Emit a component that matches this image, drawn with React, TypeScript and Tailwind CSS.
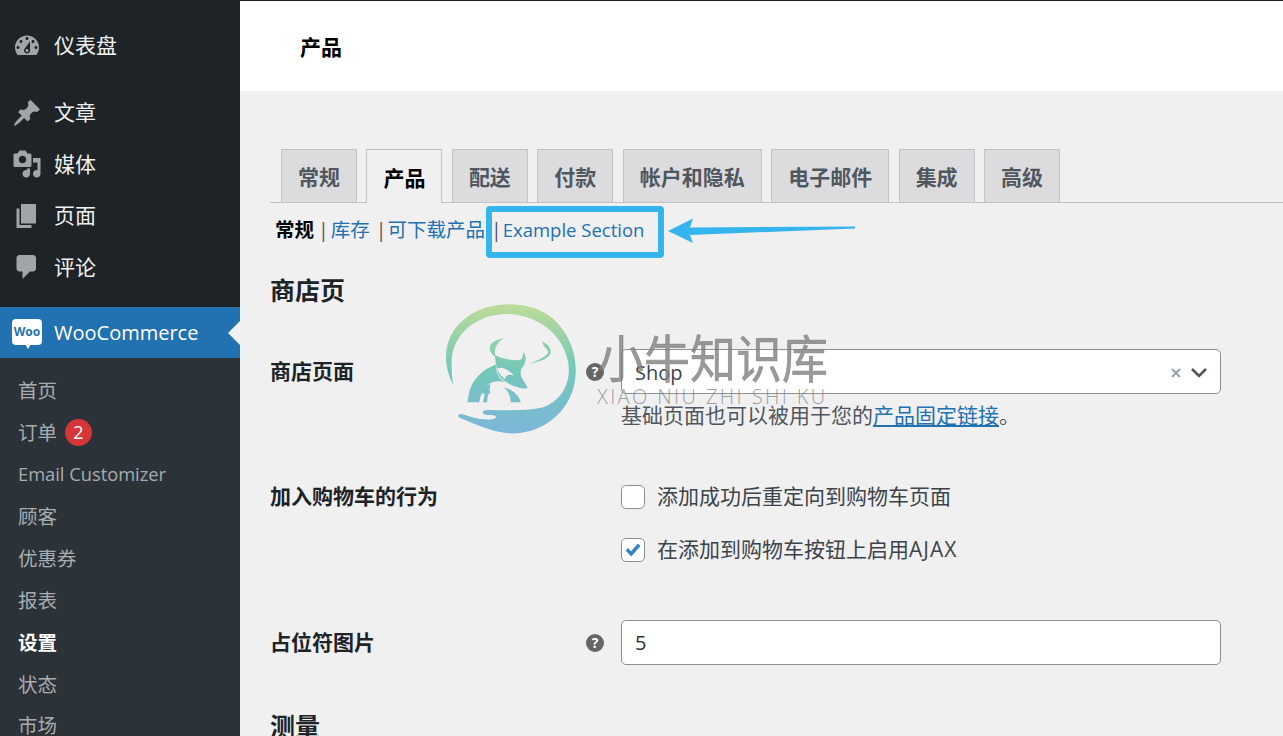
import React from "react";

const F = "[font-family:'Open_Sans','Noto_Sans_CJK_SC',sans-serif]";

const icons: Record<string, string> = {
  dash: "M3.76 16h12.48c1.1-1.37 1.76-3.11 1.76-5 0-4.42-3.58-8-8-8s-8 3.58-8 8c0 1.89.66 3.63 1.76 5zM10 4c.55 0 1 .45 1 1s-.45 1-1 1-1-.45-1-1 .45-1 1-1zM6 6c.55 0 1 .45 1 1s-.45 1-1 1-1-.45-1-1 .45-1 1-1zm8 0c.55 0 1 .45 1 1s-.45 1-1 1-1-.45-1-1 .45-1 1-1zm-5.37 5.55L12 7v6c0 1.1-.9 2-2 2s-2-.9-2-2c0-.57.24-1.08.63-1.45zM4 10c.55 0 1 .45 1 1s-.45 1-1 1-1-.45-1-1 .45-1 1-1zm12 0c.55 0 1 .45 1 1s-.45 1-1 1-1-.45-1-1 .45-1 1-1zm-5 3c0-.55-.45-1-1-1s-1 .45-1 1 .45 1 1 1 1-.45 1-1z",
  post: "M10.44 3.02l1.82-1.82 6.36 6.35-1.83 1.82c-1.05-.68-2.48-.57-3.41.36l-.75.75c-.92.93-1.04 2.35-.35 3.41l-1.83 1.82-2.41-2.41-2.8 2.79c-.42.42-3.38 2.71-3.8 2.29s1.86-3.39 2.28-3.81l2.79-2.79L4.1 9.36l1.83-1.82c1.05.69 2.48.57 3.4-.36l.75-.75c.93-.92 1.05-2.35.36-3.41z",
  media: "M13 11V4c0-.55-.45-1-1-1h-1.67L9 1H5L3.67 3H2c-.55 0-1 .45-1 1v7c0 .55.45 1 1 1h10c.55 0 1-.45 1-1zM7 4.5c1.38 0 2.5 1.12 2.5 2.5S8.38 9.5 7 9.5 4.5 8.38 4.5 7 5.62 4.5 7 4.5zM14 6h5v10.5c0 1.38-1.12 2.5-2.5 2.5S14 17.88 14 16.5s1.12-2.5 2.5-2.5c.17 0 .34.02.5.05V9h-3V6zm-4 8.05V13h2v3.5c0 1.38-1.12 2.5-2.5 2.5S7 17.88 7 16.5 8.12 14 9.5 14c.17 0 .34.02.5.05z",
  page: "M6 15V2h10v13H6zm-1 1h8v2H3V5h2v11z",
  comment: "M5 2h9c1.1 0 2 .9 2 2v7c0 1.1-.9 2-2 2h-2l-5 5v-5H5c-1.1 0-2-.9-2-2V4c0-1.1.9-2 2-2z",
};

function MainItem({ icon, label }: { icon: string; label: string }) {
  return (
    <div className="flex h-[51.4px] items-center text-[21px] text-[#f0f0f1]">
      <svg viewBox="0 0 20 20" className="ml-[12px] h-[30px] w-[30px] fill-[#a0a5aa]">
        <path d={icons[icon]} />
      </svg>
      <span className="ml-[12px]">{label}</span>
    </div>
  );
}

function SubItem({ label, bold, badge, latin }: { label: string; bold?: boolean; badge?: string; latin?: boolean }) {
  return (
    <div
      className={`flex h-[41.9px] shrink-0 items-center pl-[18px] ${latin ? "pb-[2px] text-[18.3px]" : "text-[19.5px]"} ${
        bold ? "font-bold text-white" : "text-[#a7acb1]"
      }`}
    >
      <span>{label}</span>
      {badge && (
        <span className="ml-[8px] flex h-[27px] w-[27px] items-center justify-center rounded-full bg-[#d63638] text-[18px] text-white">
          {badge}
        </span>
      )}
    </div>
  );
}

function Tab({ label, active }: { label: string; active?: boolean }) {
  return (
    <div
      className={`flex items-center border border-b-0 border-[#c3c4c7] px-[16px] pt-[4px] text-[21px] font-bold ${
        active ? "h-[54px] bg-[#f0f0f1] text-black" : "h-[53px] bg-[#dcdcde] text-[#50575e]"
      }`}
    >
      {label}
    </div>
  );
}

function Help() {
  return (
    <div className="flex h-[45px] w-[35px] items-center justify-start">
      <span className="flex h-[18px] w-[18px] items-center justify-center rounded-full bg-[#666] text-[14px] leading-none font-bold text-white">
        ?
      </span>
    </div>
  );
}

function Check({ label, latin, checked }: { label: string; latin?: string; checked?: boolean }) {
  return (
    <div className="flex h-[24px] items-center">
      <span className="flex h-[24px] w-[24px] items-center justify-center rounded-[5px] border border-[#8c8f94] bg-white">
        {checked && (
          <svg viewBox="0 0 20 20" className="h-[20px] w-[20px] fill-[#3582c4]">
            <path d="M2.6 10.4 5 8l3.1 3.2L14.9 3.6 17.5 6 8.2 16.6z" />
          </svg>
        )}
      </span>
      <span className="ml-[12px] text-[21px] text-[#3c434a]">
        {label}
        {latin && <span className="tracking-[1px]">{latin}</span>}
      </span>
    </div>
  );
}

function Watermark() {
  return (
    <div className="pointer-events-none absolute top-[300px] left-[440px] h-[140px] w-[400px]">
      <svg viewBox="0 0 420 420" className="absolute top-0 left-0 h-[140px] w-[140px]">
        <defs>
          <linearGradient id="g" gradientUnits="userSpaceOnUse" x1="0" y1="10" x2="0" y2="400">
            <stop offset="0" stopColor="#bfdc98" />
            <stop offset="0.5" stopColor="#74c8b8" />
            <stop offset="1" stopColor="#7db6da" />
          </linearGradient>
        </defs>
        <path
          fill="url(#g)"
          d="M40 255C5 190 10 110 70 60C130 5 250 -5 325 45C400 100 425 200 395 280C365 360 285 405 205 400C150 395 100 370 62 355C50 348 55 338 68 343C90 350 125 362 155 358C178 352 170 345 140 345C122 342 125 330 142 330C190 330 255 335 310 322C365 300 393 250 385 190C372 100 285 40 195 42C110 45 40 100 35 180C34 205 36 235 40 255Z"
        />
        <g fill="url(#g)">
          <path d="M165 165C190 178 225 185 245 178C248 170 250 162 250 155C258 165 260 180 252 195C243 205 240 215 243 228C250 245 262 255 262 265C250 268 225 262 205 250C185 240 172 225 172 210C168 195 165 180 165 165Z" />
          <path d="M170 193C125 208 98 240 88 275L82 307L118 307C122 280 130 262 150 250C165 243 180 242 195 248C175 235 165 215 170 193Z" />
          <path d="M190 262C215 268 238 285 242 307L212 307C212 290 205 272 190 262Z" />
          <path d="M192 115C165 120 145 130 150 150C155 165 165 172 182 177L165 165C163 145 170 128 192 115Z" />
          <path d="M150 252C135 258 125 270 124 283L134 279C133 290 131 300 128 307L142 307C141 290 146 280 152 277L148 270C150 263 152 257 150 252Z" />
          <path d="M268 192C290 180 322 172 325 155C322 145 308 138 307 125C322 130 335 145 332 160C325 178 295 185 268 192Z" />
        </g>
        <path fill="#f0f0f1" d="M172 205C190 198 205 210 222 226C205 222 195 226 195 238C185 230 175 220 172 205Z" />
      </svg>
      <div className={`absolute top-[21px] left-[158px] origin-center scale-y-[1.12] text-[46px] leading-[74px] whitespace-nowrap text-[#808080]/80 [-webkit-text-stroke:0.6px_rgba(128,128,128,0.7)] ${F}`}>
        小牛知识库
      </div>
      <div className={`absolute top-[85px] left-[157px] text-[20px] leading-[24px] font-light tracking-[2.4px] whitespace-nowrap text-[#808080]/75 ${F}`}>
        XIAO NIU ZHI SHI KU
      </div>
    </div>
  );
}

export default function App() {
  return (
    <div className={`relative flex h-[736px] w-[1283px] overflow-hidden bg-[#f0f0f1] ${F}`}>
      <aside className="flex h-[736px] w-[240px] shrink-0 flex-col overflow-hidden bg-[#1d2327]">
        <div className="shrink-0 pt-[20px]">
          <MainItem icon="dash" label="仪表盘" />
        </div>
        <div className="shrink-0 pt-[16px] pb-[14px]">
          <MainItem icon="post" label="文章" />
          <MainItem icon="media" label="媒体" />
          <MainItem icon="page" label="页面" />
          <MainItem icon="comment" label="评论" />
        </div>
        <div className="relative flex h-[51px] shrink-0 items-center bg-[#2271b1] pt-[1px] text-[20px] text-white">
          <span className="relative ml-[12px] flex h-[26px] w-[30px] -translate-y-[1px] items-center justify-center rounded-[4px] bg-white text-[12px] leading-none font-bold text-[#2271b1]">
            Woo
            <span className="absolute top-[25px] left-[13px] border-x-[3px] border-t-[5px] border-x-transparent border-t-white" />
          </span>
          <span className="ml-[12px]">WooCommerce</span>
          <span className="absolute top-[14px] right-0 border-y-[12px] border-r-[12px] border-y-transparent border-r-[#f0f0f1]" />
        </div>
        <div className="flex-1 bg-[#2c3338] pt-[12px]">
          <SubItem label="首页" />
          <SubItem label="订单" badge="2" />
          <SubItem label="Email Customizer" latin />
          <SubItem label="顾客" />
          <SubItem label="优惠券" />
          <SubItem label="报表" />
          <SubItem label="设置" bold />
          <SubItem label="状态" />
          <SubItem label="市场" />
        </div>
      </aside>

      <main className="flex h-[736px] min-w-0 flex-1 flex-col overflow-hidden">
        <header className="flex h-[91px] shrink-0 items-center border-t border-[#1d2327] bg-white pt-[4px] pl-[60px] text-[21px] font-bold text-black">
          产品
        </header>
        <div className="shrink-0 pl-[30px]">
          <div className="mt-[58px] flex h-[54px] gap-[9.45px] border-b border-[#c3c4c7] pl-[11px]">
            <Tab label="常规" />
            <Tab label="产品" active />
            <Tab label="配送" />
            <Tab label="付款" />
            <Tab label="帐户和隐私" />
            <Tab label="电子邮件" />
            <Tab label="集成" />
            <Tab label="高级" />
          </div>

          <div className="mt-[12px] flex h-[30px] items-center pl-[5px] text-[19.5px] whitespace-nowrap text-[#2271b1]">
            <span className="font-bold text-black">常规</span>
            <span className="ml-[4px] text-[#50575e]">|</span>
            <span className="ml-[2px]">库存</span>
            <span className="ml-[6px] text-[#50575e]">|</span>
            <span className="ml-[1px]">可下载产品</span>
            <span className="ml-[6px] text-[#50575e]">|</span>
            <span className="ml-[1px] text-[18.5px]">Example Section</span>
          </div>

          <h2 className="mt-[28px] flex h-[36px] items-center text-[25px] font-bold text-[#1d2327]">商店页</h2>

          <div className="mt-[40px] flex">
            <div className="flex h-[45px] w-[316px] items-center text-[21px] font-bold text-[#1d2327]">商店页面</div>
            <Help />
            <div className="w-[600px]">
              <div className="flex h-[45px] items-center rounded-[5px] border border-[#8c8f94] bg-white pt-[2px] pr-[13px] pl-[13px] text-[20px] text-[#3c434a]">
                <span className="flex-1">Shop</span>
                <svg viewBox="0 0 12 12" className="mr-[9px] h-[12px] w-[12px] stroke-[#98a2a8] stroke-2">
                  <path d="M2 2l8 8M10 2l-8 8" />
                </svg>
                <svg viewBox="0 0 16 10" className="h-[11px] w-[16px] fill-none stroke-[#50575e] stroke-[2.6]">
                  <path d="M1 1.5l7 7 7-7" />
                </svg>
              </div>
              <div className="mt-[8px] text-[21px] leading-[27px] text-[#50575e]">
                基础页面也可以被用于您的<span className="text-[#2271b1] underline">产品固定链接</span>。
              </div>
            </div>
          </div>

          <div className="mt-[56px] flex">
            <div className="flex h-[24px] w-[351px] items-center text-[21px] font-bold text-[#1d2327]">加入购物车的行为</div>
            <div className="flex flex-col gap-[29px]">
              <Check label="添加成功后重定向到购物车页面" />
              <Check label="在添加到购物车按钮上启用" latin="AJAX" checked />
            </div>
          </div>

          <div className="mt-[58px] flex">
            <div className="flex h-[45px] w-[316px] items-center text-[21px] font-bold text-[#1d2327]">占位符图片</div>
            <Help />
            <div className="flex h-[45px] w-[600px] items-center rounded-[5px] border border-[#8c8f94] bg-white pl-[13px] text-[20px] text-[#2c3338]">
              5
            </div>
          </div>

          <h2 className="mt-[44px] flex h-[36px] items-center text-[25px] font-bold text-[#1d2327]">测量</h2>
        </div>
      </main>

      <div className="pointer-events-none absolute top-[206px] left-[486px] h-[52px] w-[178px] rounded-[4px] border-[6px] border-[#35b5ee]" />
      <svg viewBox="0 0 190 30" className="pointer-events-none absolute top-[216px] left-[666px] h-[30px] w-[190px] fill-[#35b5ee]">
        <path d="M2 15L27 2.5L24 11.5L189 10.5L189 12.5L24 19L27 27Z" />
      </svg>
      <Watermark />
    </div>
  );
}
